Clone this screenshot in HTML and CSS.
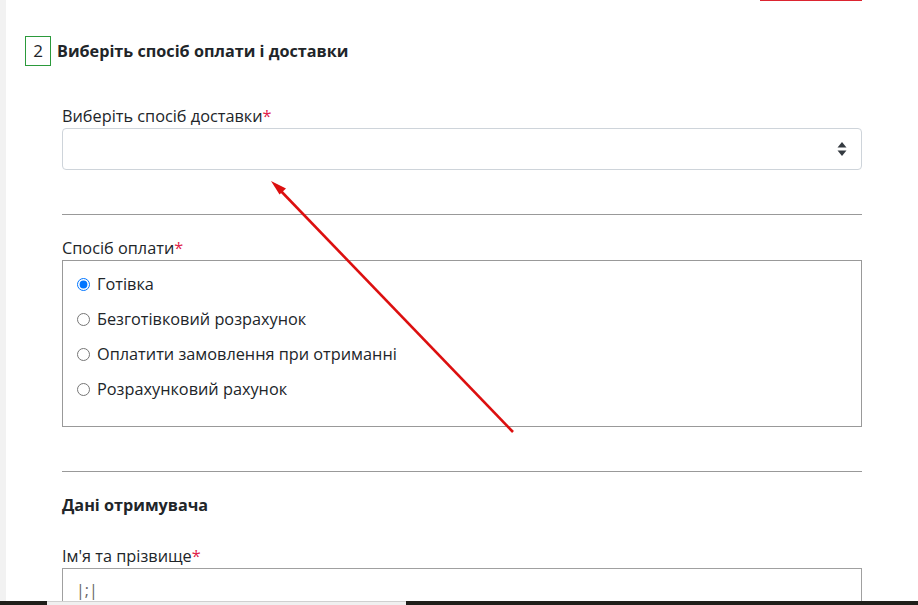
FILE: index.html
```html
<!DOCTYPE html>
<html lang="uk">
<head>
    <meta charset="UTF-8">
    <meta name="viewport" content="width=device-width, initial-scale=1.0">
    <title>Оформлення замовлення</title>
    <link rel="stylesheet" href="styles.css">
</head>
<body>
    <div class="page">
        <div class="tab-line"></div>

        <h2 class="step-title"><span class="step-num">2</span>Виберіть спосіб оплати і доставки</h2>

        <div class="checkout-form">
            <div class="form-group">
                <label class="form-label">Виберіть спосіб доставки<span class="req">*</span></label>
                <div class="select-box">
                    <svg class="select-arrows" width="10" height="16" viewBox="0 0 10 16">
                        <path d="M5 1 L9.5 6.5 H0.5 Z" fill="#343a40"/>
                        <path d="M5 15 L9.5 9.5 H0.5 Z" fill="#343a40"/>
                    </svg>
                </div>
            </div>

            <hr class="divider">

            <div class="form-group">
                <label class="form-label">Спосіб оплати<span class="req">*</span></label>
                <div class="radio-box">
                    <label class="radio-option"><input type="radio" name="payment" checked> Готівка</label>
                    <label class="radio-option"><input type="radio" name="payment"> Безготівковий розрахунок</label>
                    <label class="radio-option"><input type="radio" name="payment"> Оплатити замовлення при отриманні</label>
                    <label class="radio-option"><input type="radio" name="payment"> Розрахунковий рахунок</label>
                </div>
            </div>

            <hr class="divider">

            <h3 class="block-title">Дані отримувача</h3>

            <div class="form-group">
                <label class="form-label" for="fullName">Ім'я та прізвище<span class="req">*</span></label>
                <input type="text" id="fullName" class="text-input" value="|;|">
            </div>
        </div>

        <svg class="hint-arrow" width="918" height="605" viewBox="0 0 918 605">
            <line x1="513" y1="432" x2="278" y2="188" stroke="#dc0f0f" stroke-width="2.6"/>
            <path d="M271 181 L286 188.5 L279.5 194.5 Z" fill="#dc0f0f"/>
        </svg>
    </div>

    <div class="taskbar">
        <div class="taskbar-dark start"></div>
        <div class="taskbar-light"></div>
        <div class="taskbar-dark"></div>
    </div>
</body>
</html>
```

FILE: styles.css
```css
body {
    margin: 0;
    font-family: 'Open Sans', 'Noto Sans', sans-serif;
    font-size: 16.3px;
    color: #212529;
    background: #fff;
}
.page {
    position: relative;
    min-height: 605px;
    border-left: 6px solid #f2f2f2;
    overflow: hidden;
}
.tab-line {
    height: 1px;
    width: 102px;
    margin-left: 754px;
    background: #dc2430;
}
.step-title {
    display: flex;
    align-items: center;
    margin: 35px 0 0 19px;
    font-size: 16.2px;
    font-weight: bold;
    line-height: 30px;
}
.step-num {
    box-sizing: border-box;
    width: 26px;
    height: 30px;
    border: 1px solid #2b9a3b;
    margin-right: 6px;
    text-align: center;
    font-weight: normal;
    font-size: 17px;
    line-height: 28px;
}
.checkout-form {
    width: 800px;
    margin-left: 56px;
    padding-top: 38px;
}
.form-label {
    display: block;
    line-height: 24px;
}
.req {
    color: #e0224a;
}
.select-box {
    box-sizing: border-box;
    height: 42px;
    border: 1px solid #ced4da;
    border-radius: 4px;
    display: flex;
    align-items: center;
    justify-content: flex-end;
    padding-right: 14px;
}
.divider {
    border: none;
    border-top: 1px solid #999;
    margin: 44px 0 21px;
}
.radio-box {
    box-sizing: border-box;
    height: 167px;
    border: 1px solid #999;
    padding: 11px 14px 0;
    display: flex;
    flex-direction: column;
    gap: 11px;
}
.radio-option {
    display: flex;
    align-items: center;
    gap: 7px;
    line-height: 24px;
}
.radio-option input {
    margin: 0;
    width: 13px;
    height: 13px;
}
.block-title {
    font-size: 16.2px;
    font-weight: bold;
    line-height: 24px;
    margin: 20px 0 27px;
}
.text-input {
    box-sizing: border-box;
    display: block;
    width: 100%;
    height: 40px;
    border: 1px solid #a0a0a0;
    padding: 4px 13px 0;
    font-family: inherit;
    font-size: 16px;
    color: #666;
    outline: none;
}
.hint-arrow {
    position: absolute;
    left: -6px;
    top: 0;
    pointer-events: none;
}
.taskbar {
    position: fixed;
    left: 0;
    right: 0;
    bottom: 0;
    height: 4px;
    display: flex;
}
.taskbar-dark {
    flex: 1;
    background: #1f1f1a;
}
.taskbar-dark.start {
    flex: 0 0 47px;
}
.taskbar-light {
    flex: 0 0 359px;
    background: #f0f0f0;
    border-top: 1px solid #d0d0d0;
    box-sizing: border-box;
}
```
